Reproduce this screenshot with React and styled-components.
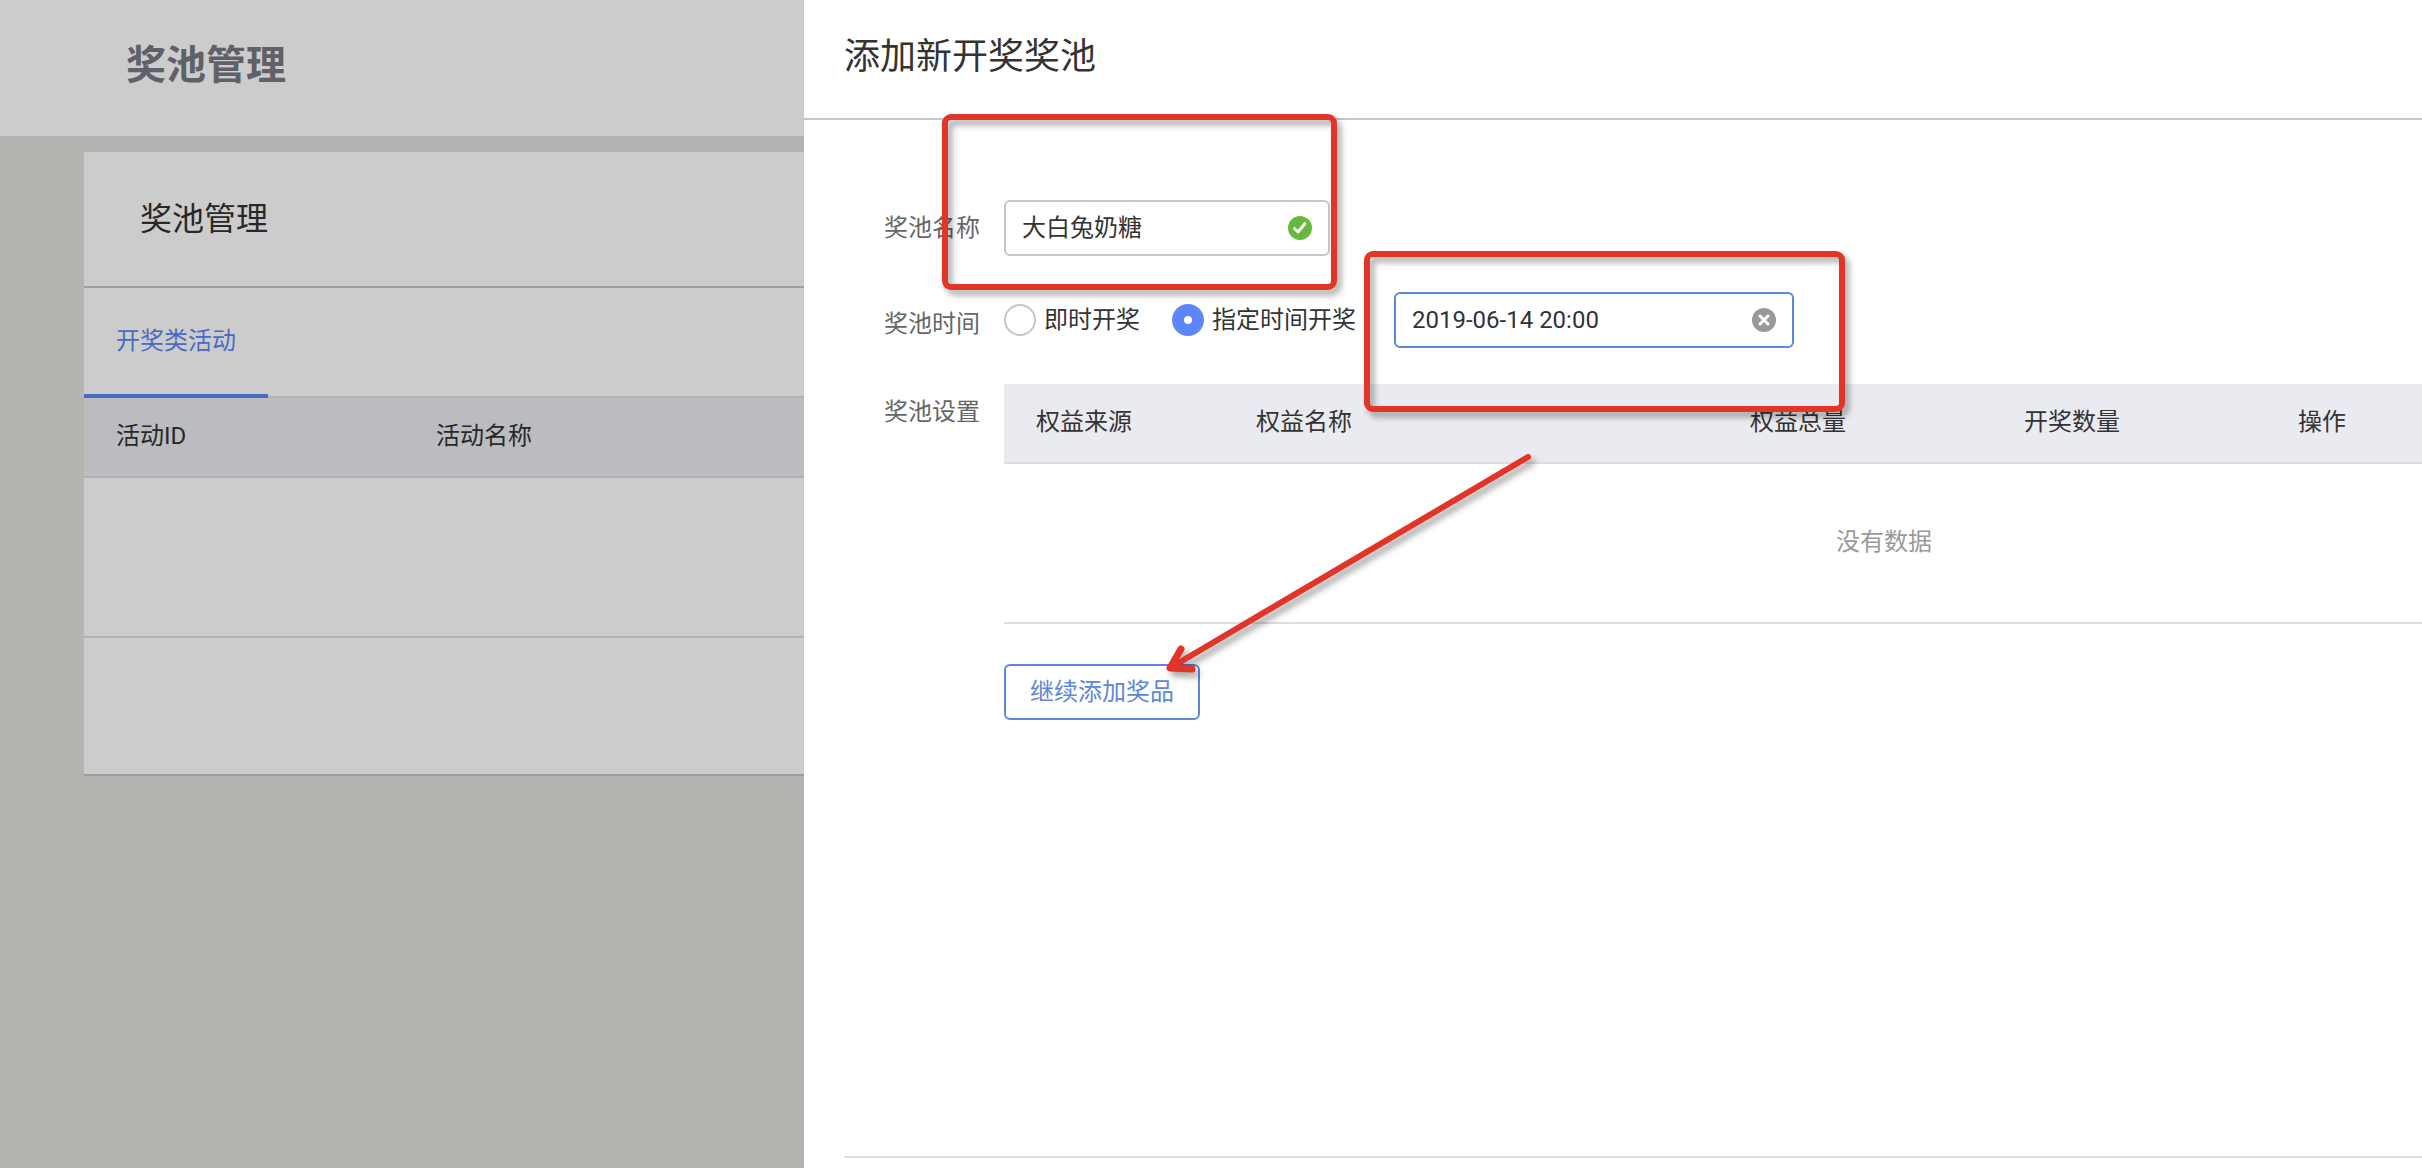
import { useState } from 'react';
import styled, { createGlobalStyle } from 'styled-components';

const App = () => {
  const [name, setName] = useState('大白兔奶糖');
  const [mode, setMode] = useState('scheduled');
  const [time, setTime] = useState('2019-06-14 20:00');

  return (
    <>
      <GlobalStyle />
      <Page>
        <TopBar>
          <h1>奖池管理</h1>
        </TopBar>
        <Panel>
          <PanelHeader>
            <h2>奖池管理</h2>
          </PanelHeader>
          <Tabs>
            <Tab type="button">开奖类活动</Tab>
          </Tabs>
          <ActivityTable>
            <thead>
              <tr>
                <th className="id">活动ID</th>
                <th>活动名称</th>
              </tr>
            </thead>
            <tbody>
              <tr>
                <td colSpan={2} />
              </tr>
            </tbody>
          </ActivityTable>
          <PanelFooter />
        </Panel>
      </Page>

      <Mask />

      <Drawer>
        <DrawerHeader>
          <h2>添加新开奖奖池</h2>
        </DrawerHeader>

        <Form onSubmit={(e) => e.preventDefault()}>
          <Field>
            <FieldLabel htmlFor="pool-name">奖池名称</FieldLabel>
            <TextBox>
              <input
                id="pool-name"
                type="text"
                value={name}
                onChange={(e) => setName(e.target.value)}
              />
              <CheckIcon />
            </TextBox>
          </Field>

          <Field $top={36}>
            <FieldLabel as="span" $drop={4}>
              奖池时间
            </FieldLabel>
            <RadioGroup role="radiogroup" aria-label="奖池时间">
              <Radio>
                <input
                  type="radio"
                  name="mode"
                  checked={mode === 'instant'}
                  onChange={() => setMode('instant')}
                />
                即时开奖
              </Radio>
              <Radio>
                <input
                  type="radio"
                  name="mode"
                  checked={mode === 'scheduled'}
                  onChange={() => setMode('scheduled')}
                />
                指定时间开奖
              </Radio>
            </RadioGroup>
            <TextBox $wide>
              <input
                type="text"
                aria-label="开奖时间"
                value={time}
                onChange={(e) => setTime(e.target.value)}
              />
              <button type="button" aria-label="清除" onClick={() => setTime('')}>
                <ClearIcon />
              </button>
            </TextBox>
          </Field>

          <Field $top={36}>
            <FieldLabel as="span">奖池设置</FieldLabel>
            <PrizeArea>
              <PrizeTable>
                <colgroup>
                  <col className="source" />
                  <col className="name" />
                  <col className="count" />
                  <col className="count" />
                  <col />
                </colgroup>
                <thead>
                  <tr>
                    <th>权益来源</th>
                    <th>权益名称</th>
                    <th>权益总量</th>
                    <th>开奖数量</th>
                    <th>操作</th>
                  </tr>
                </thead>
                <tbody>
                  <tr>
                    <td colSpan={5}>没有数据</td>
                  </tr>
                </tbody>
              </PrizeTable>
              <AddButton type="button">继续添加奖品</AddButton>
            </PrizeArea>
          </Field>
        </Form>

        <DrawerFooter />
        <Annotations />
      </Drawer>
    </>
  );
};

const CheckIcon = () => (
  <svg width="24" height="24" viewBox="0 0 24 24" aria-hidden="true">
    <circle cx="12" cy="12" r="12" fill="#67b93e" />
    <path
      d="M6.5 12.5l3.5 3.5 7-8.5"
      fill="none"
      stroke="#fff"
      strokeWidth="2.8"
      strokeLinecap="round"
      strokeLinejoin="round"
    />
  </svg>
);

const ClearIcon = () => (
  <svg width="24" height="24" viewBox="0 0 24 24" aria-hidden="true">
    <circle cx="12" cy="12" r="12" fill="#999" />
    <path
      d="M8 8l8 8M16 8l-8 8"
      fill="none"
      stroke="#fff"
      strokeWidth="3"
      strokeLinecap="round"
    />
  </svg>
);

// red markup drawn over the form, in drawer coordinates
const Annotations = () => (
  <Overlay width="1100" height="700" viewBox="0 0 1100 700" aria-hidden="true">
    <g fill="none" stroke="#e23427" strokeWidth="6" strokeLinecap="round" strokeLinejoin="round">
      <rect x="141" y="117" width="389" height="170" rx="6" />
      <rect x="563" y="254" width="475" height="155" rx="6" />
      <path d="M724 457L366 668" />
      <path d="M377 649L366 668L388 669" strokeWidth="7" />
    </g>
  </Overlay>
);

const GlobalStyle = createGlobalStyle`
  * {
    box-sizing: border-box;
  }

  body {
    margin: 0;
    overflow: hidden;
    background-color: #e2e3dd;
    color: #333;
    font-family: Roboto, 'Noto Sans CJK SC', sans-serif;
    font-size: 24px;
    line-height: 32px;
  }

  h1,
  h2 {
    margin: 0;
    font-weight: 400;
  }

  button,
  input {
    font: inherit;
    color: inherit;
  }

  table {
    border-collapse: separate;
    border-spacing: 0;
    table-layout: fixed;
  }

  th {
    font-weight: 400;
    text-align: left;
  }
`;

const Page = styled.div`
  min-height: 100vh;
`;

const TopBar = styled.header`
  display: flex;
  align-items: center;
  height: 136px;
  padding: 0 126px 4px;
  background-color: #fff;

  h1 {
    color: #777883;
    font-size: 40px;
    font-weight: 700;
    line-height: 56px;
  }
`;

const Panel = styled.main`
  margin: 16px 0 0 84px;
  background-color: #fff;
  border-bottom: 2px solid #c6c6c8;
`;

const PanelHeader = styled.div`
  display: flex;
  align-items: center;
  height: 136px;
  padding: 0 56px;
  border-bottom: 2px solid #c6c8c9;

  h2 {
    font-size: 32px;
    line-height: 48px;
  }
`;

const Tabs = styled.nav`
  display: flex;
  height: 110px;
  box-shadow: inset 0 -2px #e0e0e0;
`;

const Tab = styled.button`
  padding: 0 32px;
  border: 0;
  border-bottom: 4px solid #5d86f5;
  background: none;
  color: #5d86f5;
`;

const ActivityTable = styled.table`
  width: 100%;

  th {
    height: 80px;
    padding: 0 32px 2px;
    background-color: #eaebf0;
    border-bottom: 2px solid #dcdde2;
  }

  .id {
    width: 320px;
  }

  td {
    height: 160px;
    border-bottom: 2px solid #dedede;
  }
`;

const PanelFooter = styled.div`
  height: 136px;
`;

const Mask = styled.div`
  position: fixed;
  inset: 0;
  background-color: rgba(0, 0, 0, 0.2);
`;

const Drawer = styled.section`
  position: fixed;
  top: 0;
  right: 0;
  bottom: 0;
  left: 804px;
  display: flex;
  flex-direction: column;
  overflow: hidden;
  background-color: #fff;
`;

const DrawerHeader = styled.header`
  display: flex;
  align-items: center;
  flex-shrink: 0;
  height: 120px;
  padding: 0 40px 4px;
  border-bottom: 2px solid #c6c6c6;

  h2 {
    font-size: 36px;
    line-height: 48px;
  }
`;

const Form = styled.form`
  flex: 1;
  padding: 80px 0 0 80px;
`;

const Field = styled.div`
  display: flex;
  align-items: flex-start;
  margin-top: ${({ $top }) => $top || 0}px;
`;

const FieldLabel = styled.label`
  flex-shrink: 0;
  width: 120px;
  padding-top: ${({ $drop }) => 12 + ($drop || 0)}px;
  color: #666;
`;

const TextBox = styled.div`
  display: flex;
  align-items: center;
  width: ${({ $wide }) => ($wide ? 400 : 326)}px;
  height: 56px;
  padding: 0 16px;
  border: 2px solid ${({ $wide }) => ($wide ? '#5d86dc' : '#c6c6c6')};
  border-radius: 6px;
  background-color: #fff;

  input {
    flex: 1;
    min-width: 0;
    padding: 0;
    border: 0;
    outline: none;
    background: none;
  }

  button {
    display: flex;
    padding: 0;
    border: 0;
    background: none;
    cursor: pointer;
  }
`;

const RadioGroup = styled.div`
  display: flex;
  align-items: center;
  gap: 32px;
  height: 56px;
  margin-right: 38px;
`;

const Radio = styled.label`
  display: flex;
  align-items: center;
  gap: 8px;

  input {
    appearance: none;
    width: 32px;
    height: 32px;
    margin: 0;
    border: 2px solid #c6c6c6;
    border-radius: 50%;
    background-color: #fff;
  }

  input:checked {
    border: 12px solid #5d86f8;
  }
`;

const PrizeArea = styled.div`
  flex-shrink: 0;
  width: 1760px;
`;

const PrizeTable = styled.table`
  width: 100%;

  .source {
    width: 220px;
  }

  .name {
    width: 494px;
  }

  .count {
    width: 274px;
  }

  th {
    height: 80px;
    padding: 0 32px 2px;
    background-color: #eaebf0;
    border-bottom: 2px solid #dcdde0;
  }

  td {
    height: 160px;
    padding: 0 0 2px;
    border-bottom: 2px solid #dedede;
    color: #999;
    text-align: center;
  }
`;

const AddButton = styled.button`
  height: 56px;
  margin-top: 40px;
  padding: 0 24px;
  border: 2px solid #5d86dc;
  border-radius: 6px;
  background-color: #fff;
  color: #5d86dc;
  cursor: pointer;
`;

const DrawerFooter = styled.footer`
  flex-shrink: 0;
  height: 12px;
  margin-left: 40px;
  border-top: 2px solid #dedede;
`;

const Overlay = styled.svg`
  position: absolute;
  top: 0;
  left: 0;
  pointer-events: none;
  filter: drop-shadow(4px 5px 3px rgba(0, 0, 0, 0.35));
`;

export default App;
